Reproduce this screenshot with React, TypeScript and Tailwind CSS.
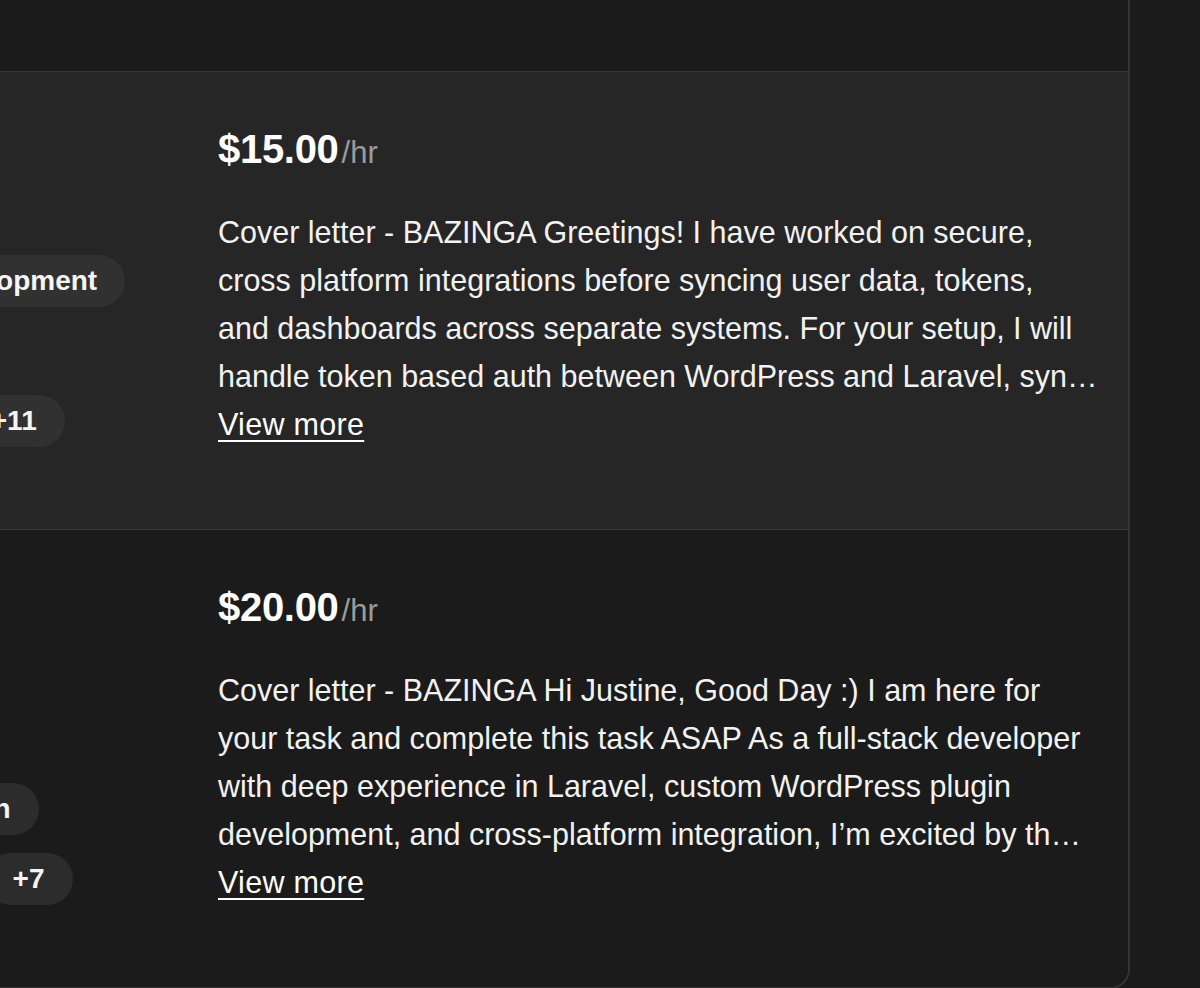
import React from 'react';

type Bid = {
  id: number;
  rate: string;
  skills: string[][];
  letter: string[];
  bg: string;
  pill: string;
};

const bids: Bid[] = [
  {
    id: 1,
    rate: '$15.00',
    skills: [['Web Development'], ['Laravel'], ['CRM', '+11']],
    letter: [
      'Cover letter - BAZINGA Greetings! I have worked on secure,',
      'cross platform integrations before syncing user data, tokens,',
      'and dashboards across separate systems. For your setup, I will',
      'handle token based auth between WordPress and Laravel, syn…',
    ],
    bg: 'bg-[#262626]',
    pill: 'bg-[#313131]',
  },
  {
    id: 2,
    rate: '$20.00',
    skills: [['MySQL'], ['Automation'], ['Alpine', '+7']],
    letter: [
      'Cover letter - BAZINGA Hi Justine, Good Day :) I am here for',
      'your task and complete this task ASAP As a full-stack developer',
      'with deep experience in Laravel, custom WordPress plugin',
      'development, and cross-platform integration, I’m excited by th…',
    ],
    bg: 'bg-[#1b1b1b]',
    pill: 'bg-[#2c2c2c]',
  },
];

export default function App() {
  return (
    <div className="min-h-screen overflow-hidden bg-[#1b1b1b] font-['Liberation_Sans',Arial,sans-serif] text-[#f2f2f2]">
      <div className="-ml-[213px] w-[1343px] overflow-hidden rounded-br-[20px] border-r-2 border-b-2 border-[#353535]">
        {/* previous row, mostly scrolled out */}
        <div className="h-[72px] border-b border-[#383838] bg-[#1b1b1b]" />

        {bids.map((bid, i) => (
          <BidRow key={bid.id} bid={bid} last={i === bids.length - 1} />
        ))}
      </div>
    </div>
  );
}

function BidRow({ bid, last }: { bid: Bid; last: boolean }) {
  return (
    <div
      className={`flex gap-12 pt-[52px] pb-[81px] pl-10 pr-10 ${bid.bg} ${
        last ? '' : 'border-b border-[#383838]'
      }`}
    >
      {/* skills column */}
      <div className="w-[343px] shrink-0">
        <div className="h-[131px]" />
        <div className="flex flex-col gap-[18px]">
          {bid.skills.map((row, r) => (
            <div key={r} className="flex gap-4">
              {row.map((s) => (
                <span
                  key={s}
                  className={`flex h-[52px] items-center whitespace-nowrap rounded-full px-7 text-[28px] font-bold text-[#f5f5f5] ${bid.pill}`}
                >
                  {s}
                </span>
              ))}
            </div>
          ))}
        </div>
      </div>

      {/* proposal column */}
      <div className="min-w-0 flex-1">
        <div className="flex h-12 items-baseline overflow-hidden pt-px leading-[48px]">
          <span className="text-[40px] font-bold tracking-[-0.3px] text-white">{bid.rate}</span>
          <span className="ml-[3px] text-[31px] text-[#9b9b9b]">/hr</span>
        </div>
        <p className="mt-9 text-[30.5px] leading-[48px]">
          {bid.letter.map((line) => (
            <span key={line} className="block whitespace-nowrap">
              {line}
            </span>
          ))}
        </p>
        <button className="block text-[30.5px] leading-[48px] tracking-[0.3px] text-white underline decoration-2 underline-offset-[5px]">
          View more
        </button>
      </div>
    </div>
  );
}
